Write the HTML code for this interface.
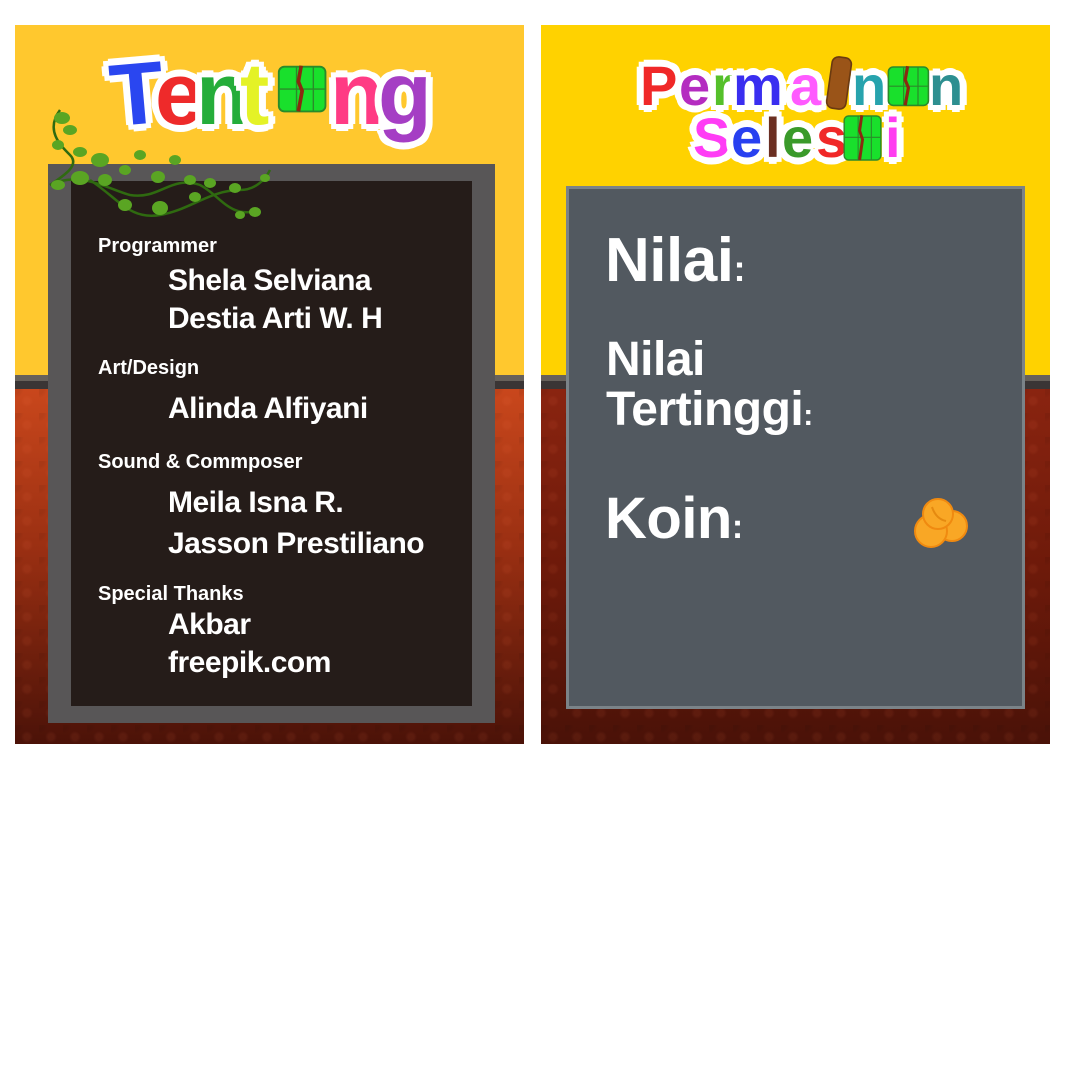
<!DOCTYPE html>
<html><head><meta charset="utf-8"><style>
*{margin:0;padding:0;box-sizing:border-box}
body{width:1067px;height:1067px;background:#fff;position:relative;overflow:hidden;font-family:"Liberation Sans",sans-serif}
.a{position:absolute}
.t{position:absolute;color:#fff;font-weight:bold;line-height:1;white-space:nowrap;letter-spacing:-0.5px}
.h{font-size:20px;letter-spacing:0}
.n{font-size:30px}
.L{position:absolute;font-weight:bold;line-height:1;
text-shadow:0 5px 0 #fff,0 -5px 0 #fff,5px 0 0 #fff,-5px 0 0 #fff,4px 4px 0 #fff,-4px 4px 0 #fff,4px -4px 0 #fff,-4px -4px 0 #fff,0 7px 0 #fff,7px 0 0 #fff,-7px 0 0 #fff,0 -7px 0 #fff,5px 5px 0 #fff,-5px 5px 0 #fff,5px -5px 0 #fff,-5px -5px 0 #fff}
.b{font-size:88px}
.s{font-size:56px}
.pat{background-image:radial-gradient(circle at 50% 50%,rgba(255,120,80,.08) 3px,transparent 6px),radial-gradient(circle at 0 0,rgba(0,0,0,.06) 5px,transparent 9px);background-size:24px 24px}
</style></head><body>
<!-- LEFT PANEL -->
<div class="a" style="left:15px;top:25px;width:509px;height:350px;background:#ffc82e"></div>
<div class="a" style="left:15px;top:375px;width:509px;height:6px;background:#67615b"></div>
<div class="a" style="left:15px;top:381px;width:509px;height:8px;background:#3a3535"></div>
<div class="a" style="left:15px;top:389px;width:509px;height:355px;background:linear-gradient(#c9471c,#9a2f12 45%,#4b1208)"></div>
<div class="a pat" style="left:15px;top:389px;width:509px;height:355px"></div>
<div class="a" style="left:48px;top:164px;width:447px;height:559px;background:#585657"></div>
<div class="a" style="left:71px;top:181px;width:401px;height:525px;background:#251c19"></div>
<!-- Tentong title -->
<div class="L b" style="left:110px;top:50px;color:#2a46f0;transform:rotate(-5deg)">T</div>
<div class="L b" style="left:155px;top:50px;color:#ee2a2a">e</div>
<div class="L b" style="left:196px;top:50px;color:#25ad3a">n</div>
<div class="L b" style="left:240px;top:50px;color:#e4f226">t</div>
<div class="L b" style="left:330px;top:50px;color:#ff3b84">n</div>
<div class="L b" style="left:378px;top:50px;color:#a53ec4">g</div>
<svg class="a" style="left:276px;top:60px" width="56" height="60" viewBox="0 0 60 58">
<rect x="3" y="4" width="50" height="48" rx="6" fill="#19e02c" stroke="#2b8a2a" stroke-width="2"/>
<path d="M4 28 H52 M22 4 V52 M40 4 V52" stroke="#2b8a2a" stroke-width="1.5"/>
<path d="M27 3 L24 20 L28 30 L24 52" stroke="#8a2a10" stroke-width="4" fill="none"/>
</svg>
<!-- vine -->
<svg class="a" style="left:40px;top:100px" width="240" height="130" viewBox="0 0 240 130">
<g fill="none" stroke="#2f6a10" stroke-width="2.5">
<path d="M20 10 C5 30 20 45 30 55 C40 65 25 75 10 85"/>
<path d="M10 85 C40 70 70 90 90 95 C120 100 130 75 160 85 C180 95 190 120 220 110"/>
<path d="M50 80 C80 100 90 120 120 115 C150 110 170 90 200 90 C215 90 225 80 230 70"/>
</g>
<g fill="#5aa523">
<ellipse cx="22" cy="18" rx="8" ry="6"/><ellipse cx="30" cy="30" rx="7" ry="5"/><ellipse cx="18" cy="45" rx="6" ry="5"/>
<ellipse cx="40" cy="52" rx="7" ry="5"/><ellipse cx="60" cy="60" rx="9" ry="7"/><ellipse cx="18" cy="85" rx="7" ry="5"/>
<ellipse cx="40" cy="78" rx="9" ry="7"/><ellipse cx="65" cy="80" rx="7" ry="6"/><ellipse cx="85" cy="70" rx="6" ry="5"/>
<ellipse cx="100" cy="55" rx="6" ry="5"/><ellipse cx="118" cy="77" rx="7" ry="6"/><ellipse cx="135" cy="60" rx="6" ry="5"/>
<ellipse cx="150" cy="80" rx="6" ry="5"/><ellipse cx="155" cy="97" rx="6" ry="5"/><ellipse cx="120" cy="108" rx="8" ry="7"/>
<ellipse cx="85" cy="105" rx="7" ry="6"/><ellipse cx="170" cy="83" rx="6" ry="5"/><ellipse cx="195" cy="88" rx="6" ry="5"/>
<ellipse cx="215" cy="112" rx="6" ry="5"/><ellipse cx="225" cy="78" rx="5" ry="4"/><ellipse cx="200" cy="115" rx="5" ry="4"/>
</g></svg>
<div class="t h" style="left:98px;top:236px">Programmer</div>
<div class="t n" style="left:168px;top:266px">Shela Selviana</div>
<div class="t n" style="left:168px;top:304px">Destia Arti W. H</div>
<div class="t h" style="left:98px;top:358px">Art/Design</div>
<div class="t n" style="left:168px;top:394px">Alinda Alfiyani</div>
<div class="t h" style="left:98px;top:452px">Sound &amp; Commposer</div>
<div class="t n" style="left:168px;top:488px">Meila Isna R.</div>
<div class="t n" style="left:168px;top:529px">Jasson Prestiliano</div>
<div class="t h" style="left:98px;top:584px">Special Thanks</div>
<div class="t n" style="left:168px;top:610px">Akbar</div>
<div class="t n" style="left:168px;top:648px">freepik.com</div>

<!-- RIGHT PANEL -->
<div class="a" style="left:541px;top:25px;width:509px;height:350px;background:#ffd200"></div>
<div class="a" style="left:541px;top:375px;width:509px;height:6px;background:#67615b"></div>
<div class="a" style="left:541px;top:381px;width:509px;height:8px;background:#3a3535"></div>
<div class="a" style="left:541px;top:389px;width:509px;height:355px;background:linear-gradient(#8a2410,#6e1a0a 50%,#4a1208)"></div>
<div class="a pat" style="left:541px;top:389px;width:509px;height:355px"></div>
<div class="a" style="left:566px;top:186px;width:459px;height:523px;background:#525960;border:3px solid #7b8388"></div>
<!-- Permainan -->
<div class="L s" style="left:640px;top:58px;color:#f02828">P</div>
<div class="L s" style="left:679px;top:58px;color:#b42cc0">e</div>
<div class="L s" style="left:712px;top:58px;color:#55c02a">r</div>
<div class="L s" style="left:733px;top:58px;color:#3a2ef0">m</div>
<div class="L s" style="left:790px;top:58px;color:#ff5aff">a</div>
<div class="L s" style="left:852px;top:58px;color:#27a3ad">n</div>
<div class="L s" style="left:929px;top:58px;color:#2d8f90">n</div>
<svg class="a" style="left:822px;top:55px" width="34" height="56" viewBox="0 0 30 52"><rect x="6" y="2" width="18" height="48" rx="6" transform="rotate(8 15 26)" fill="#9a5418" stroke="#6b3a10" stroke-width="1.5"/></svg>
<svg class="a" style="left:886px;top:63px" width="48" height="48" viewBox="0 0 60 58"><rect x="3" y="4" width="50" height="48" rx="6" fill="#19e02c" stroke="#2b8a2a" stroke-width="2"/><path d="M4 28 H52 M22 4 V52 M40 4 V52" stroke="#2b8a2a" stroke-width="1.5"/><path d="M27 3 L24 20 L28 30 L24 52" stroke="#8a2a10" stroke-width="4" fill="none"/></svg>
<!-- Selesai -->
<div class="L s" style="left:693px;top:110px;color:#ff3cf5">S</div>
<div class="L s" style="left:731px;top:110px;color:#2840f0">e</div>
<div class="L s" style="left:765px;top:110px;color:#6b2f22">l</div>
<div class="L s" style="left:782px;top:110px;color:#3a9a2a">e</div>
<div class="L s" style="left:816px;top:110px;color:#f02828">s</div>
<div class="L s" style="left:885px;top:110px;color:#ff3cf0">i</div>
<svg class="a" style="left:842px;top:112px" width="44" height="52" viewBox="0 0 60 68"><rect x="3" y="4" width="50" height="60" rx="6" fill="#19e02c" stroke="#2b8a2a" stroke-width="2"/><path d="M4 33 H52 M22 4 V64 M40 4 V64" stroke="#2b8a2a" stroke-width="1.5"/><path d="M27 3 L24 24 L28 36 L24 64" stroke="#8a2a10" stroke-width="4" fill="none"/></svg>

<div class="t" style="left:605px;top:230px;font-size:62px">Nilai<span style="font-size:36px">:</span></div>
<div class="t" style="left:606px;top:336px;font-size:48px">Nilai</div>
<div class="t" style="left:606px;top:386px;font-size:48px">Tertinggi<span style="font-size:30px">:</span></div>
<div class="t" style="left:605px;top:490px;font-size:58px">Koin<span style="font-size:34px">:</span></div>
<svg class="a" style="left:910px;top:493px" width="64" height="60" viewBox="0 0 64 60">
<g fill="#f9a725" stroke="#f08a10" stroke-width="2">
<circle cx="42" cy="33" r="15"/><circle cx="21" cy="38" r="16"/><circle cx="28" cy="21" r="15"/>
</g>
<path d="M22 14 Q26 26 36 28" stroke="#e58a10" stroke-width="2" fill="none"/>
</svg>
</body></html>
